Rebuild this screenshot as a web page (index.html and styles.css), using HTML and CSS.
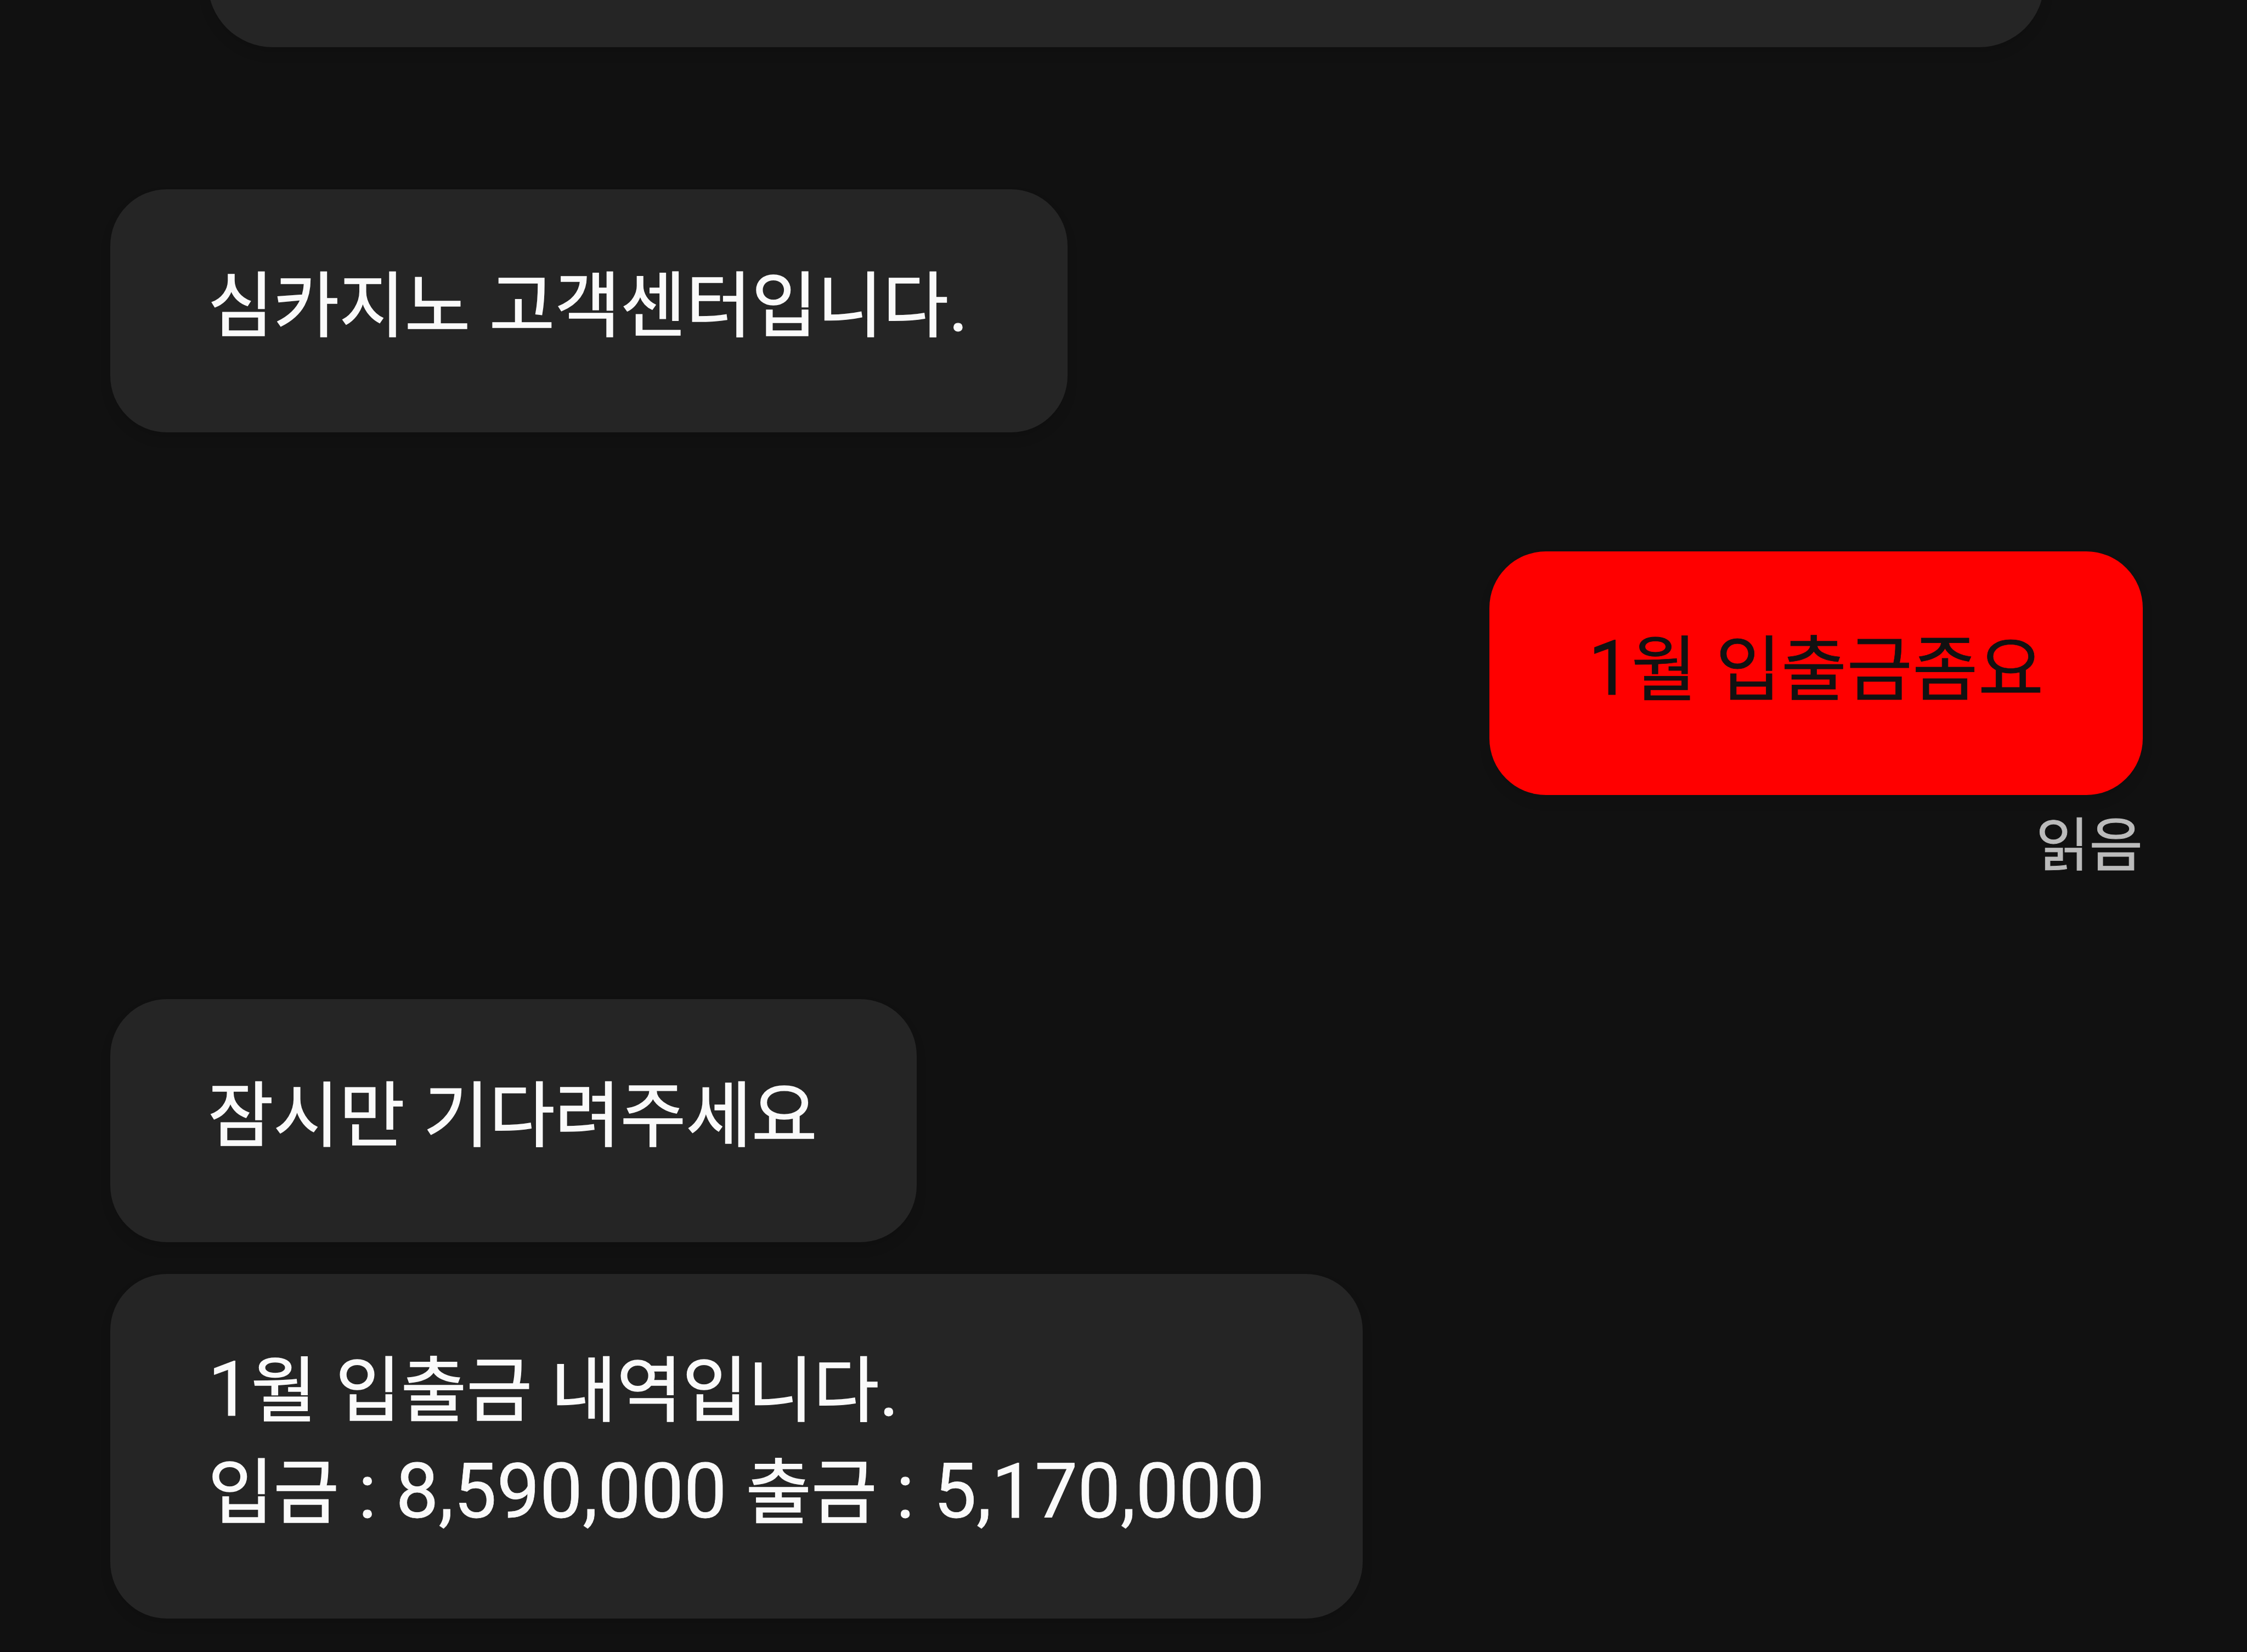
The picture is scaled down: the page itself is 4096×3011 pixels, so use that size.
FILE: index.html
```html
<!DOCTYPE html>
<html lang="ko">
<head>
    <meta charset="UTF-8">
    <meta name="viewport" content="width=device-width, initial-scale=1.0">
    <title>고객센터</title>
    <link rel="stylesheet" href="styles.css">
</head>
<body>

    <div class="chat">
        <div class="notice"></div>

        <div class="group received">
            <div class="bubble greeting">심카지노 고객센터입니다<span class="latin">.</span></div>
        </div>

        <div class="group sent">
            <div class="bubble"><span class="latin">1</span>월 입출금좀요</div>
            <div class="status">읽음</div>
        </div>

        <div class="group received replies">
            <div class="bubble wait">잠시만 기다려주세요</div>
            <div class="bubble history">
                <p><span class="latin">1</span>월 입출금 내역입니다<span class="latin">.</span></p>
                <p>입금<span class="latin"> : 8,590,000 </span>출금<span class="latin"> : 5,170,000</span></p>
            </div>
        </div>
    </div>

</body>
</html>
```

FILE: styles.css
```css
* {
    box-sizing: border-box;
}
body {
    margin: 0;
    background: #111111;
    font-family: Roboto, "Noto Sans CJK KR", sans-serif;
}
.chat {
    display: flex;
    flex-direction: column;
    height: 3011px;
    padding: 0 190px 0 201px;
    border-bottom: 3px solid #0e0a0e;
    overflow: hidden;
}
.notice {
    flex: none;
    height: 286px;
    margin: -200px 180px 0 178px;
    background: #252525;
    border-radius: 118px;
    box-shadow: 0 12px 20px rgba(0, 0, 0, 0.1);
}
.group {
    display: flex;
    flex-direction: column;
    flex: none;
}
.received {
    align-items: flex-start;
    margin-top: 259px;
}
.sent {
    align-items: flex-end;
    height: 600px;
    margin-top: 217px;
}
.replies {
    gap: 58px;
    margin-top: 216px;
}
.bubble {
    flex: none;
    height: 443px;
    padding: 121px 178px 0;
    background: #252525;
    color: #fafafa;
    border-radius: 103px;
    box-shadow: 0 12px 20px rgba(0, 0, 0, 0.1);
    font-size: 130px;
    line-height: 186px;
    word-spacing: 2px;
    white-space: nowrap;
    -webkit-text-stroke: 1.6px currentColor;
}
.bubble p {
    height: 186px;
    margin: 0;
}
.latin {
    font-size: 139.5px;
    line-height: 1;
    word-spacing: 0;
    white-space: pre;
    -webkit-text-stroke-width: 0.8px;
}
.sent .bubble {
    width: 1191px;
    height: 444px;
    padding-top: 124px;
    padding-left: 180px;
    background: #ff0000;
    color: #111111;
    -webkit-text-stroke-width: 0.8px;
}
.greeting {
    width: 1745px;
}
.wait {
    width: 1470px;
}
.history {
    width: 2283px;
    height: 628px;
}
.status {
    margin-top: 18px;
    color: #bbbbbb;
    font-size: 106px;
    line-height: 150px;
    -webkit-text-stroke: 1px currentColor;
}
```
